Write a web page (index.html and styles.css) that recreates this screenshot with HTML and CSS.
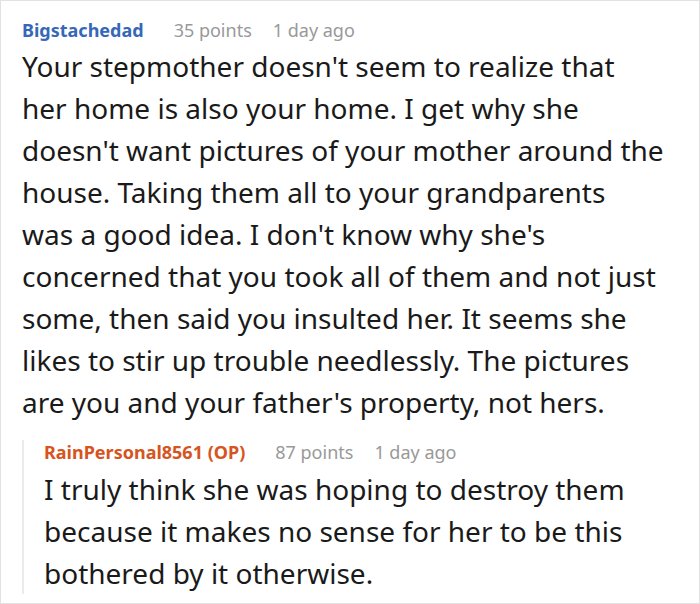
FILE: index.html
```html
<!DOCTYPE html>
<html>
<head>
<meta charset="utf-8">
<link rel="stylesheet" href="styles.css">
</head>
<body>
<div class="card">
  <div class="comment">
    <div class="meta">
      <span class="author">Bigstachedad</span>
      <span class="info">35 points</span>
      <span class="info">1 day ago</span>
    </div>
    <p class="text">Your stepmother doesn't seem to realize that<br>
her home is also your home. I get why she<br>
doesn't want pictures of your mother around the<br>
house. Taking them all to your grandparents<br>
was a good idea. I don't know why she's<br>
concerned that you took all of them and not just<br>
some, then said you insulted her. It seems she<br>
likes to stir up trouble needlessly. The pictures<br>
are you and your father's property, not hers.</p>
    <div class="reply">
      <div class="meta">
        <span class="author op">RainPersonal8561 (OP)</span>
        <span class="info">87 points</span>
        <span class="info">1 day ago</span>
      </div>
      <p class="text">I truly think she was hoping to destroy them<br>
because it makes no sense for her to be this<br>
bothered by it otherwise.</p>
    </div>
  </div>
</div>
</body>
</html>
```

FILE: styles.css
```css
html, body {
  margin: 0;
  padding: 0;
  background: #fff;
}
.card {
  box-sizing: border-box;
  width: 700px;
  height: 604px;
  border: 1px solid #e2e2e2;
  padding: 17px 4px 0 21px;
  font-family: "Noto Sans", sans-serif;
}
.meta {
  display: flex;
  gap: 21px;
  font-size: 18px;
  line-height: 24px;
}
.author {
  font-weight: 700;
  color: #3668b8;
  margin-right: 9px;
}
.author.op {
  color: #d6541e;
}
.info {
  color: #999;
}
.text {
  margin: 3px 0 0;
  font-size: 28px;
  line-height: 42px;
  color: #1a1a1a;
  white-space: nowrap;
}
.reply {
  margin-top: 29px;
  border-left: 2px solid #ebebeb;
  padding-left: 20px;
}
.reply .meta {
  margin-top: -12px;
}
.reply .text {
  margin-top: 4px;
  margin-bottom: -8px;
}
```
